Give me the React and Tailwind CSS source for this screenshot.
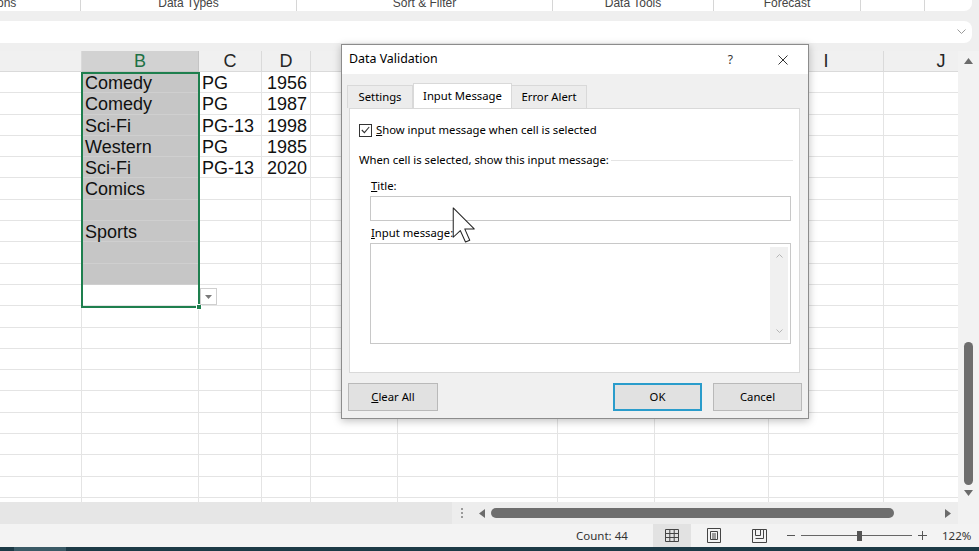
import clsx from "clsx";

const COLUMNS = [
  { label: "", w: "w-[82px]" },
  { label: "B", w: "w-[117px]" },
  { label: "C", w: "w-[63px]" },
  { label: "D", w: "w-[49px]" },
  { label: "", w: "w-[87px]" },
  { label: "", w: "w-[160px]" },
  { label: "", w: "w-[97px]" },
  { label: "", w: "w-[114px]" },
  { label: "I", w: "w-[115px]" },
  { label: "J", w: "w-[115px]" },
];

const GENRES = ["Comedy", "Comedy", "Sci-Fi", "Western", "Sci-Fi", "Comics", "", "Sports", "", ""];
const RATINGS = ["PG", "PG", "PG-13", "PG", "PG-13"];
const YEARS = ["1956", "1987", "1998", "1985", "2020"];

const ROWS = Array.from({ length: 21 }, (_, i) => i);

const Ribbon = () => (
  <div className="flex h-[11px] w-[972px] shrink-0 overflow-hidden rounded-br-[8px] bg-white text-[12px] leading-[12px] text-[#444]">
    <div className="relative w-[81px] shrink-0 border-r border-[#d6d6d6]">
      <span className="absolute left-[-3px] top-[-3px]">ons</span>
    </div>
    <div className="relative w-[216px] shrink-0 border-r border-[#d6d6d6] text-center">
      <span className="relative top-[-3px]">Data Types</span>
    </div>
    <div className="relative w-[256px] shrink-0 border-r border-[#d6d6d6] text-center">
      <span className="relative top-[-3px]">Sort &amp; Filter</span>
    </div>
    <div className="relative w-[161px] shrink-0 border-r border-[#d6d6d6] text-center">
      <span className="relative top-[-3px]">Data Tools</span>
    </div>
    <div className="relative w-[147px] shrink-0 border-r border-[#d6d6d6] text-center">
      <span className="relative top-[-3px]">Forecast</span>
    </div>
    <div className="w-[64px] shrink-0 border-r border-[#d6d6d6]" />
    <div className="flex-1" />
  </div>
);

const FormulaBar = () => (
  <div className="mt-[10px] flex h-[22px] w-[972px] shrink-0 items-center justify-end rounded-r-[8px] bg-white pr-[6px]">
    <svg width="9" height="6" viewBox="0 0 9 6">
      <path d="M0.5 0.5 L4.5 4.5 L8.5 0.5" fill="none" stroke="#9a9a9a" strokeWidth="1" />
    </svg>
  </div>
);

const HeaderRow = () => (
  <div className="flex h-[21px] shrink-0">
    {COLUMNS.map((col, c) => (
      <div
        key={c}
        className={clsx(
          col.w,
          "shrink-0 border-r border-b text-center text-[18px] leading-[21px]",
          c === 1
            ? "border-[#c4c4c4] bg-[#d2d2d2] text-[#1e7145]"
            : "border-[#dadada] bg-[#f0f0f0] text-[#262626]"
        )}
      >
        {col.label}
      </div>
    ))}
  </div>
);

const Row = ({ i }) => (
  <div className="flex h-[21.3px] shrink-0">
    {COLUMNS.map((col, c) => {
      const gray = c === 1 && i < 10;
      let text = "";
      if (c === 1) text = GENRES[i] || "";
      if (c === 2) text = RATINGS[i] || "";
      if (c === 3) text = YEARS[i] || "";
      return (
        <div
          key={c}
          className={clsx(
            col.w,
            "shrink-0 whitespace-nowrap border-r border-b px-[3px] pt-[1px] text-[18px] leading-[21px] text-[#111]",
            gray ? "border-[#cfcfcf] bg-[#c6c6c6]" : "border-[#e4e4e4] bg-white",
            c === 3 && "text-right"
          )}
        >
          {text}
        </div>
      );
    })}
  </div>
);

const Sheet = () => (
  <div className="flex h-[451px] shrink-0">
    <div className="relative w-[958px] shrink-0 overflow-hidden bg-white">
      <HeaderRow />
      {ROWS.map((i) => (
        <Row key={i} i={i} />
      ))}
      {/* selection outline B1:B11 */}
      <div className="absolute left-[81px] top-[21px] h-[236px] w-[119px] border-2 border-[#1e7f4e]" />
      <div className="absolute left-[196px] top-[253px] h-[6px] w-[6px] border border-white bg-[#1e7f4e]" />
      {/* list dropdown */}
      <div className="absolute left-[200px] top-[237px] flex h-[17px] w-[17px] items-center justify-center border border-[#cfcfcf] bg-white">
        <svg width="7" height="4" viewBox="0 0 7 4">
          <path d="M0 0 L7 0 L3.5 4 Z" fill="#7a7a7a" />
        </svg>
      </div>
    </div>
    <div className="flex w-[21px] shrink-0 flex-col items-center bg-[#f2f2f2]">
      <svg className="mt-[7px]" width="9" height="6" viewBox="0 0 9 6">
        <path d="M0 6 L4.5 0 L9 6 Z" fill="#6b6b6b" />
      </svg>
      <div className="mt-[278px] h-[143px] w-[9px] rounded-full bg-[#6e6e6e]" />
      <svg className="mt-[5px]" width="9" height="6" viewBox="0 0 9 6">
        <path d="M0 0 L9 0 L4.5 6 Z" fill="#6b6b6b" />
      </svg>
    </div>
  </div>
);

const HScroll = () => (
  <div className="flex h-[22px] shrink-0 bg-[#e6e6e6]">
    <div className="w-[452px] shrink-0" />
    <div className="flex w-[506px] shrink-0 items-center bg-[#ededed]">
      <div className="ml-[9px] flex flex-col gap-[2px]">
        <div className="h-[2px] w-[2px] bg-[#9a9a9a]" />
        <div className="h-[2px] w-[2px] bg-[#9a9a9a]" />
        <div className="h-[2px] w-[2px] bg-[#9a9a9a]" />
      </div>
      <svg className="ml-[16px]" width="6" height="9" viewBox="0 0 6 9">
        <path d="M6 0 L0 4.5 L6 9 Z" fill="#6b6b6b" />
      </svg>
      <div className="ml-[6px] h-[10px] w-[403px] rounded-full bg-[#6e6e6e]" />
      <svg className="ml-[51px]" width="6" height="9" viewBox="0 0 6 9">
        <path d="M0 0 L6 4.5 L0 9 Z" fill="#6b6b6b" />
      </svg>
    </div>
    <div className="flex-1 bg-[#f2f2f2]" />
  </div>
);

const StatusBar = () => (
  <div className="flex h-[23px] shrink-0 items-center bg-[#f3f3f3] text-[12px] text-[#333]">
    <div className="w-[576px] shrink-0" />
    <span className="w-[52px] shrink-0 whitespace-nowrap font-['Noto_Sans',sans-serif] text-[11.5px]">Count: 44</span>
    <div className="ml-[25px] flex h-[23px] w-[38px] items-center justify-center bg-[#e2e2e2]">
      <svg width="14" height="13" viewBox="0 0 14 13">
        <path d="M0.5 0.5 H13.5 V12.5 H0.5 Z M0.5 4.5 H13.5 M0.5 8.5 H13.5 M4.8 0.5 V12.5 M9.2 0.5 V12.5" fill="none" stroke="#444" strokeWidth="1" />
      </svg>
    </div>
    <svg className="ml-[16px]" width="14" height="15" viewBox="0 0 14 15">
      <path d="M0.5 0.5 H13.5 V14.5 H0.5 Z" fill="none" stroke="#444" />
      <path d="M3.5 3.5 H10.5 V11.5 H3.5 Z M5 6 H9 M5 8 H9 M5 10 H9" fill="none" stroke="#444" />
    </svg>
    <svg className="ml-[31px]" width="15" height="14" viewBox="0 0 15 14">
      <path d="M0.5 0.5 H14.5 V13.5 H0.5 Z" fill="none" stroke="#444" />
      <path d="M3.5 0.5 V6.5 H8.5 V0.5 M3.5 9.5 H11.5 V0.5" fill="none" stroke="#444" />
    </svg>
    <div className="ml-[20px] h-[1px] w-[8px] bg-[#555]" />
    <div className="relative ml-[6px] flex h-[12px] w-[111px] items-center">
      <div className="h-[1px] w-full bg-[#666]" />
      <div className="absolute left-[56px] top-[1px] h-[10px] w-[5px] bg-[#555]" />
    </div>
    <svg className="ml-[6px]" width="9" height="9" viewBox="0 0 9 9">
      <path d="M0 4.5 H9 M4.5 0 V9" stroke="#555" strokeWidth="1" />
    </svg>
    <span className="ml-[15px] font-['Noto_Sans',sans-serif] text-[11.5px]">122%</span>
  </div>
);

const Taskbar = () => (
  <div className="flex h-[4px] shrink-0 bg-[#1c3a46]">
    <div className="ml-[14px] w-[52px] bg-[#3a5a66]" />
  </div>
);

const Checkbox = () => (
  <div className="flex h-[13px] w-[13px] shrink-0 items-center justify-center border border-[#333] bg-white">
    <svg width="9" height="8" viewBox="0 0 9 8">
      <path d="M0.8 4 L3.4 6.6 L8.2 1" fill="none" stroke="#333" strokeWidth="1.1" />
    </svg>
  </div>
);

const DialogButton = ({ children, primary, className }) => (
  <button
    type="button"
    className={clsx(
      "h-[28px] bg-[#e1e1e1] text-[11.3px] text-black",
      primary ? "border-2 border-[#2a9ccb]" : "border border-[#b9b9b9]",
      className
    )}
  >
    {children}
  </button>
);

const DataValidationDialog = () => (
  <div className="absolute left-[341px] top-[44px] flex h-[375px] w-[468px] flex-col border border-[#8c8c8c] bg-[#f0f0f0] font-['Noto_Sans',sans-serif] text-[11.3px] text-black shadow-[0_2px_8px_rgba(0,0,0,0.25)]">
    <div className="flex h-[29px] shrink-0 items-center bg-white pl-[7px]">
      <span className="text-[12.4px]">Data Validation</span>
      <span className="ml-auto text-[12px] text-[#333]">?</span>
      <svg className="ml-[45px] mr-[20px]" width="10" height="10" viewBox="0 0 10 10">
        <path d="M0.5 0.5 L9.5 9.5 M9.5 0.5 L0.5 9.5" stroke="#333" strokeWidth="1" />
      </svg>
    </div>

    <div className="ml-[5px] mt-[10px] flex h-[24px] shrink-0 items-end">
      <div className="flex h-[23px] w-[66px] items-center justify-center border border-b-0 border-[#d9d9d9] bg-[#ececec]">Settings</div>
      <div className="relative z-10 flex h-[25px] w-[99px] items-center justify-center border border-b-0 border-[#d9d9d9] bg-white">Input Message</div>
      <div className="flex h-[23px] w-[75px] items-center justify-center border border-b-0 border-l-0 border-[#d9d9d9] bg-[#ececec]">Error Alert</div>
    </div>

    <div className="ml-[7px] flex h-[265px] w-[451px] shrink-0 flex-col border border-[#d9d9d9] bg-white">
      <div className="ml-[9px] mt-[14px] flex h-[14px] items-center gap-[4px]">
        <Checkbox />
        <span><u>S</u>how input message when cell is selected</span>
      </div>
      <div className="ml-[9px] mr-[6px] mt-[15px] flex h-[16px] items-center">
        <span className="whitespace-nowrap">When cell is selected, show this input message:</span>
        <div className="ml-[2px] h-[1px] flex-1 bg-[#e4e4e4]" />
      </div>
      <div className="ml-[21px] mt-[10px] h-[16px] leading-[16px]">
        <u>T</u>itle:
      </div>
      <div className="ml-[20px] mt-[2px] h-[25px] w-[421px] border border-[#c8c8c8] bg-white" />
      <div className="ml-[21px] mt-[4px] h-[16px] leading-[16px]">
        <u>I</u>nput message:
      </div>
      <div className="ml-[20px] mt-[2px] flex h-[101px] w-[421px] justify-end border border-[#c8c8c8] bg-white py-[3px] pr-[2px]">
        <div className="flex w-[18px] flex-col items-center justify-between bg-[#f0f0f0] py-[7px]">
          <svg width="7" height="4" viewBox="0 0 7 4">
            <path d="M0.5 3.5 L3.5 0.5 L6.5 3.5" fill="none" stroke="#b5b5b5" />
          </svg>
          <svg width="7" height="4" viewBox="0 0 7 4">
            <path d="M0.5 0.5 L3.5 3.5 L6.5 0.5" fill="none" stroke="#b5b5b5" />
          </svg>
        </div>
      </div>
    </div>

    <div className="mx-[6px] mt-[10px] flex shrink-0">
      <DialogButton className="w-[90px]">
        <u>C</u>lear All
      </DialogButton>
      <DialogButton primary className="ml-auto w-[89px]">OK</DialogButton>
      <DialogButton className="ml-[11px] w-[89px]">Cancel</DialogButton>
    </div>
  </div>
);

const Cursor = () => (
  <svg className="absolute left-[452px] top-[207px]" width="24" height="36" viewBox="0 0 12.6 19.4">
    <path
      d="M0.5 0.5 L0.5 16.3 L4.3 12.7 L7.1 18.9 L9.4 17.9 L6.7 11.8 L11.8 11.8 Z"
      fill="white"
      stroke="#222"
      strokeWidth="0.55"
      strokeLinejoin="round"
    />
  </svg>
);

export default function App() {
  return (
    <div className="relative flex h-[551px] w-[979px] flex-col overflow-hidden bg-[#efefef] font-['Liberation_Sans',Arial,sans-serif]">
      <Ribbon />
      <FormulaBar />
      <div className="h-[8px] shrink-0" />
      <Sheet />
      <HScroll />
      <StatusBar />
      <Taskbar />
      <DataValidationDialog />
      <Cursor />
    </div>
  );
}
